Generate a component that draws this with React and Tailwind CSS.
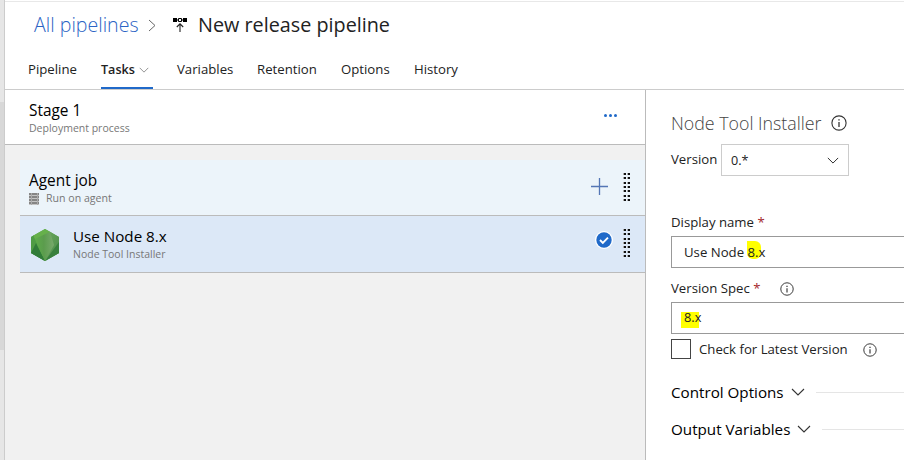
import React from "react";

const Info = ({ className }) => (
  <svg viewBox="0 0 16 16" className={className} fill="none" stroke="#333">
    <circle cx="8" cy="8" r="7.1" strokeWidth="1.1" />
    <path d="M8 7v5" strokeWidth="1.3" />
    <path d="M8 4.2v1.4" strokeWidth="1.4" />
  </svg>
);

const Chevron = ({ className }) => (
  <svg viewBox="0 0 14 8" className={className} fill="none" stroke="currentColor">
    <path d="M1 1l6 6 6-6" strokeWidth="1.1" />
  </svg>
);

const Grip = () => (
  <svg viewBox="0 0 8 28" className="h-7 w-2 shrink-0" shapeRendering="crispEdges">
    {[0, 4, 9, 13, 17, 22, 26].map((y) => (
      <React.Fragment key={y}>
        <path d={`M0 ${y}h3v2h-3zM4 ${y}h3v2h-3z`} fill="#aaa" />
        <path d={`M1 ${y}h2v2h-2zM5 ${y}h2v2h-2z`} fill="#111" />
      </React.Fragment>
    ))}
  </svg>
);

const PipelineIcon = () => (
  <svg viewBox="0 0 14 15" className="h-[15px] w-[14px] shrink-0">
    <path d="M0 0h4v4H0zM10 0h4v4h-4z" fill="#000" />
    <path d="M5.5.5h3v3h-3zM4 2h1M9 2h1" fill="none" stroke="#000" />
    <path d="M7 14V6M3.8 9L7 5.8 10.2 9" fill="none" stroke="#222" strokeWidth="1.1" />
  </svg>
);

const ServerIcon = () => (
  <svg viewBox="0 0 10 12" className="h-3 w-2.5 shrink-0" shapeRendering="crispEdges">
    <rect width="10" height="12" fill="#c4c4c4" />
    <path d="M0 0h10v2H0zM0 3h10v2H0zM0 6h10v2H0zM0 9h10v2H0z" fill="#858585" />
    <path d="M2 0h1v12H2zM8 0h1v12H8z" fill="#aaa" />
  </svg>
);

const NodeLogo = () => (
  <svg viewBox="0 0 30 34" className="h-[34px] w-[30px] shrink-0">
    <defs>
      <linearGradient id="leaf" x1="0" y1="0" x2="1" y2="0">
        <stop offset="0" stopColor="#5fb04a" />
        <stop offset="0.5" stopColor="#5b9c4d" />
        <stop offset="1" stopColor="#78a96c" />
      </linearGradient>
      <linearGradient id="side" x1="0" y1="0" x2="1" y2="1">
        <stop offset="0" stopColor="#6aa75d" />
        <stop offset="1" stopColor="#4b8b4a" />
      </linearGradient>
    </defs>
    <path d="M15 1l14 8v16l-14 8-14-8V9z" fill="#57a846" />
    <path d="M5 16l10 17-14-8z" fill="#317c39" />
    <path d="M1 9l3-1.700 3 9.700-6 8z" fill="#4f9c45" />
    <path d="M6 15L1 25l14 8z" fill="#317c39" />
    <path d="M20 3.800L29 9v16l-14 8z" fill="url(#side)" />
    <path d="M29 14v11l-14 8z" fill="#38803d" />
    <path d="M3.500 7.600L20 3.800 24 17 15 33z" fill="url(#leaf)" />
    <path d="M15 1L3.500 7.600 5 11 20 3.800z" fill="#66b04b" />
  </svg>
);

const tabs = [
  ["Pipeline", "w-[73px]"],
  ["Tasks", "w-[76px]"],
  ["Variables", "w-[80px]"],
  ["Retention", "w-[84px]"],
  ["Options", "w-[73px]"],
  ["History", "w-[60px]"],
];

export default function App() {
  return (
    <div className="flex h-[460px] w-[904px] overflow-hidden bg-white font-['Open_Sans','Noto_Sans',sans-serif] whitespace-nowrap text-[#222]">
      <div className="w-[5px] shrink-0 border-r border-[#ccc] bg-[#e6e6e6] pt-[102px]">
        <div className="h-[248px] bg-[#d8d8d8]" />
      </div>
      <div className="flex min-w-0 flex-1 flex-col">
        <header className="mt-px h-[89px] shrink-0 border-y border-t-[#e8e8e8] border-b-[#ccc]">
          <div className="flex h-[46px] items-center pl-[29px]">
            <span className="w-[114px] text-[19.6px] font-light text-[#2b63c4]">All pipelines</span>
            <svg viewBox="0 0 8 13" className="h-[13px] w-2 text-[#666]" fill="none" stroke="currentColor">
              <path d="M1 1l6 5.500-6 5.500" />
            </svg>
            <span className="ml-[17px]"><PipelineIcon /></span>
            <span className="ml-[11px] text-[19.8px]">New release pipeline</span>
          </div>
          <nav className="flex h-[41px] items-stretch pl-[23px] text-[13.2px]">
            {tabs.map(([name, width]) => (
              <div key={name} className={width}>
                {name === "Tasks" ? (
                  <div className="flex h-[41px] w-[52px] items-center border-b-2 border-[#2069c9] pt-[5px] text-[12.6px] font-semibold">
                    <span className="w-[38px]">Tasks</span>
                    <Chevron className="h-[6px] w-[10px] text-[#777]" />
                  </div>
                ) : (
                  <div className="flex h-[41px] items-center pt-0.5">{name}</div>
                )}
              </div>
            ))}
          </nav>
        </header>
        <div className="flex min-h-0 flex-1">
          <section className="w-[641px] shrink-0 border-r border-[#bbb] bg-[#f1f1f1]">
            <div className="flex h-[55px] items-center border-b border-[#bbb] bg-white pr-[28px] pl-6">
              <div className="flex-1 pt-0.5">
                <div className="text-[15.4px] leading-[20px] text-black">Stage 1</div>
                <div className="text-[10.5px] leading-[15px] text-[#777]">Deployment process</div>
              </div>
              <svg viewBox="0 0 13 3" className="mb-[4px] h-[3px] w-[13px]" fill="#1f69c9">
                <circle cx="1.500" cy="1.500" r="1.500" /><circle cx="6.500" cy="1.500" r="1.500" /><circle cx="11.500" cy="1.500" r="1.500" />
              </svg>
            </div>
            <div className="pt-[15px] pl-[15px]">
              <div className="flex h-[56px] items-center border-b border-[#bbb] bg-[#ecf4fa] pr-[14px] pl-[9px]">
                <div className="flex-1 pt-0.5">
                  <div className="text-[15.4px] leading-[20px] text-black">Agent job</div>
                  <div className="flex items-center gap-[7px] text-[10.6px] leading-[15px] text-[#777]"><ServerIcon />Run on agent</div>
                </div>
                <svg viewBox="0 0 17 17" className="mr-[15px] mb-[3px] h-[17px] w-[17px]" stroke="#5476b5" fill="none">
                  <path d="M8.500 0v17M0 8.500h17" strokeWidth="1.300" />
                </svg>
                <div className="mb-0.5"><Grip /></div>
              </div>
              <div className="flex h-[57px] items-center border-b border-[#bbb] bg-[#dce8f7] pr-[14px] pl-[10px]">
                <div className="pt-0.5"><NodeLogo /></div>
                <div className="ml-[13px] flex-1">
                  <div className="text-[15.2px] leading-[19px] text-black">Use Node 8.x</div>
                  <div className="text-[10.5px] leading-[16px] text-[#777]">Node Tool Installer</div>
                </div>
                <svg viewBox="0 0 18 18" className="mr-[10px] mb-[8px] h-[18px] w-[18px]">
                  <circle cx="9" cy="9" r="9" fill="#fff" />
                  <circle cx="9" cy="9" r="7.700" fill="#1f69c9" />
                  <path d="M5 9l2.800 2.800L13 6.600" fill="none" stroke="#fff" strokeWidth="1.900" />
                </svg>
                <div className="mb-0.5"><Grip /></div>
              </div>
            </div>
          </section>
          <section className="min-w-0 flex-1 pt-[22px] pl-[25px] text-[13.2px]">
            <div className="flex h-[22px] items-center">
              <span className="w-[160px] text-[17.8px] font-light text-[#444]">Node Tool Installer</span>
              <Info className="h-4 w-4" />
            </div>
            <div className="mt-[10px] flex h-8">
              <span className="w-[50px] leading-[31px]">Version</span>
              <div className="flex w-[128px] items-center justify-between border border-[#ccc] pt-0.5 pr-[9px] pl-[9px]">
                <span className="text-[12.6px]">0.*</span><Chevron className="mb-0.5 h-[7px] w-[12px]" />
              </div>
            </div>
            <div className="mt-[35px] h-[25px] leading-[22px]">Display name <span className="text-[#a4262c]">*</span></div>
            <div className="flex h-8 items-center border border-r-0 border-[#999] pt-0.5 pl-3">
              Use Node&nbsp;<span className="relative isolate before:absolute before:-top-0.5 before:-left-px before:-z-10 before:h-[18px] before:w-[14px] before:rounded-tr-md before:rounded-b-md before:bg-[#ffff00]">8.x</span>
            </div>
            <div className="flex h-[34px] items-center pt-2">
              <span className="w-[109px] text-[13.2px]">Version Spec <span className="text-[#a4262c]">*</span></span>
              <Info className="h-[14px] w-[14px]" />
            </div>
            <div className="flex h-8 items-center border border-r-0 border-[#999] pl-3">
              <span className="relative isolate text-[12.8px] before:absolute before:top-[4px] before:-left-[3px] before:-z-10 before:h-[16px] before:w-[18px] before:bg-[#ffff00]">8.x</span>
            </div>
            <div className="mt-[5px] flex h-5 items-center">
              <div className="h-5 w-5 border border-[#444]" />
              <span className="mt-0.5 ml-2 w-[164px]">Check for Latest Version</span>
              <Info className="mt-0.5 h-[14px] w-[14px]" />
            </div>
            <div className="mt-[23px] flex h-[20px] items-center text-[15.2px] text-black">
              <span className="w-[120px]">Control Options</span>
              <Chevron className="h-2 w-[14px] text-[#333]" />
              <div className="ml-[11px] h-px flex-1 bg-[#e5e5e5]" />
            </div>
            <div className="mt-[17px] flex h-[20px] items-center text-[15.2px] text-black">
              <span className="w-[126px]">Output Variables</span>
              <Chevron className="h-2 w-[14px] text-[#333]" />
              <div className="ml-[11px] h-px flex-1 bg-[#e5e5e5]" />
            </div>
          </section>
        </div>
      </div>
    </div>
  );
}
